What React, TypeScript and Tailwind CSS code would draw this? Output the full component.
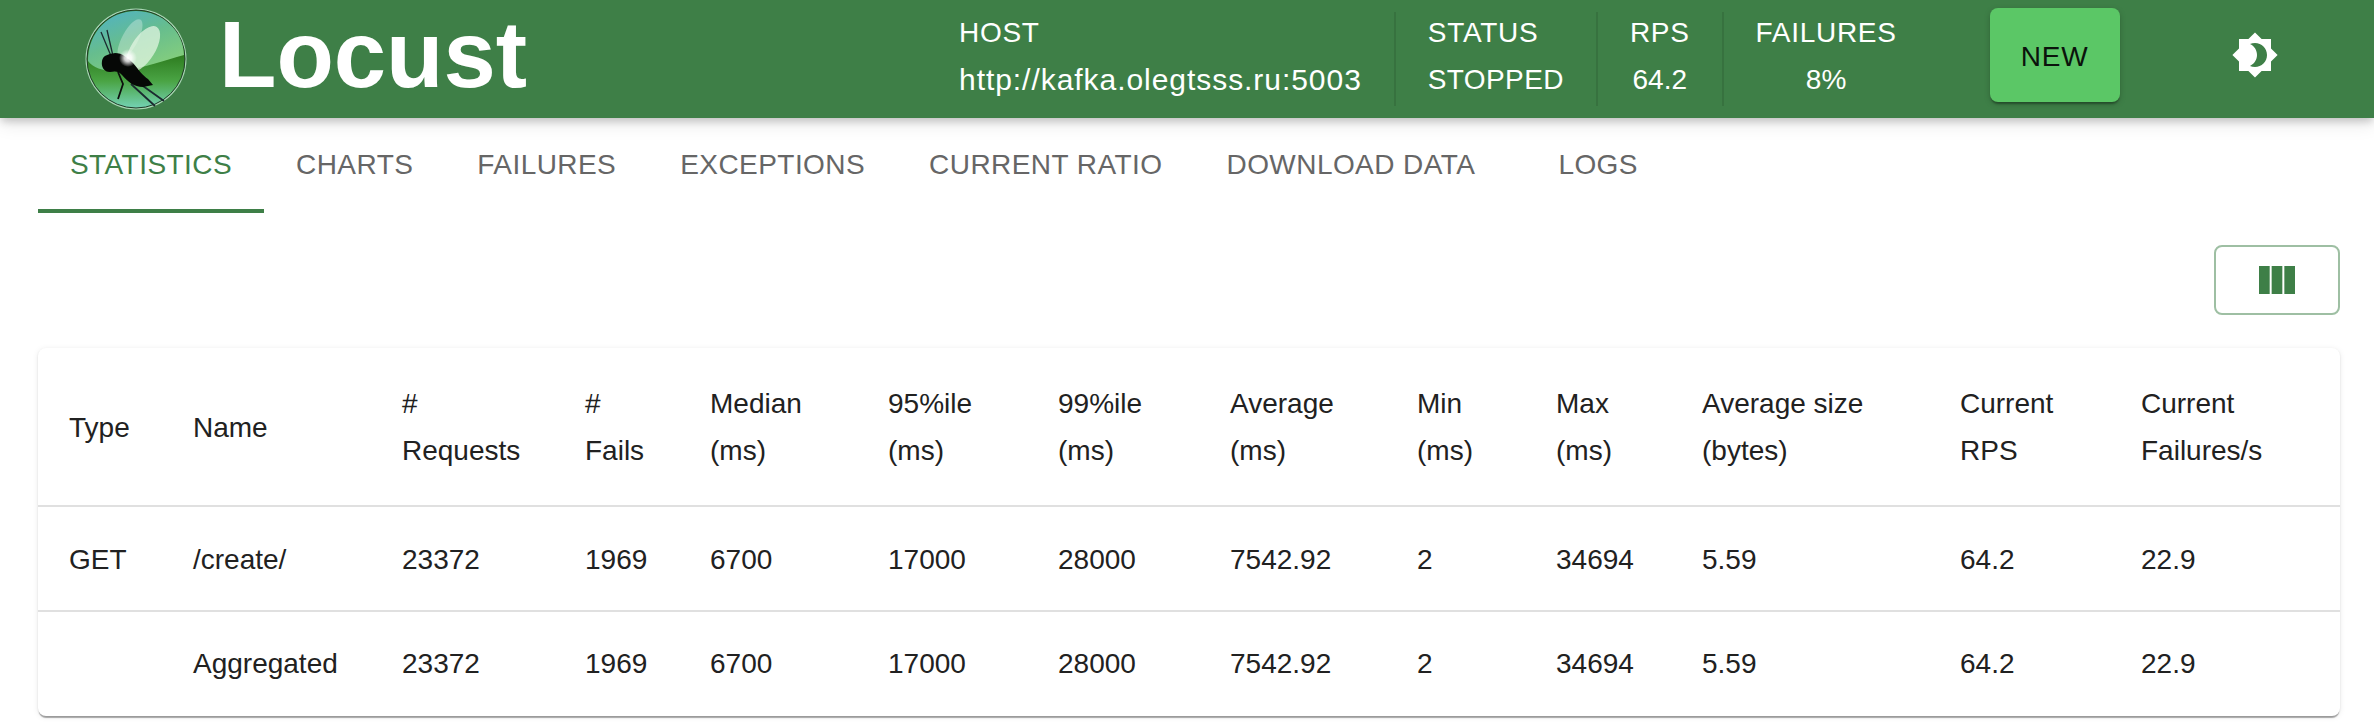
import { FC } from "react";

const COLUMNS = [
  { width: 123, label: ["Type"] },
  { width: 209, label: ["Name"] },
  { width: 183, label: ["#", "Requests"] },
  { width: 125, label: ["#", "Fails"] },
  { width: 178, label: ["Median", "(ms)"] },
  { width: 170, label: ["95%ile", "(ms)"] },
  { width: 172, label: ["99%ile", "(ms)"] },
  { width: 187, label: ["Average", "(ms)"] },
  { width: 139, label: ["Min", "(ms)"] },
  { width: 146, label: ["Max", "(ms)"] },
  { width: 258, label: ["Average size", "(bytes)"] },
  { width: 181, label: ["Current", "RPS"] },
  { width: 231, label: ["Current", "Failures/s"] },
];

const ROWS = [
  ["GET", "/create/", "23372", "1969", "6700", "17000", "28000", "7542.92", "2", "34694", "5.59", "64.2", "22.9"],
  ["", "Aggregated", "23372", "1969", "6700", "17000", "28000", "7542.92", "2", "34694", "5.59", "64.2", "22.9"],
];

const TABS = ["STATISTICS", "CHARTS", "FAILURES", "EXCEPTIONS", "CURRENT RATIO", "DOWNLOAD DATA", "LOGS"];

const LocustLogo = () => (
  <svg width="102" height="102" viewBox="0 0 102 102" className="shrink-0">
    <defs>
      <linearGradient id="globe" x1="0.5" y1="0.45" x2="0.5" y2="1">
        <stop offset="0" stopColor="#2c7a1e" />
        <stop offset="0.5" stopColor="#4aa444" />
        <stop offset="1" stopColor="#74d2b4" />
      </linearGradient>
      <linearGradient id="gloss" x1="0.1" y1="0" x2="0.7" y2="1">
        <stop offset="0" stopColor="#4fb2c6" />
        <stop offset="0.5" stopColor="#66bd8e" />
        <stop offset="1" stopColor="#86cf7c" />
      </linearGradient>
      <radialGradient id="glow" cx="0.5" cy="0.5" r="0.5">
        <stop offset="0" stopColor="#ffffff" />
        <stop offset="0.4" stopColor="#ffffff" stopOpacity="0.8" />
        <stop offset="1" stopColor="#ffffff" stopOpacity="0" />
      </radialGradient>
    </defs>
    <circle cx="51" cy="51" r="50.5" fill="#a9d6b4" />
    <circle cx="51" cy="51" r="49" fill="url(#globe)" stroke="#1f3a26" strokeWidth="1" />
    <path d="M3 53C3 24 24 3 51 3C78 3 99 24 99 47C80 52 60 60 34 63C20 64 8 60 3 53Z" fill="url(#gloss)" />
    <ellipse cx="45" cy="31" rx="8" ry="22" transform="rotate(28 45 31)" fill="#ffffff" opacity="0.3" />
    <ellipse cx="58" cy="41" rx="12" ry="26" transform="rotate(32 58 41)" fill="#e6f7e4" opacity="0.72" />
    <g stroke="#1b2a30" fill="none">
      <path d="M16 24L26 48M22 22L28 48" strokeWidth="1.3" />
      <path d="M33 64L38 76L33 91" strokeWidth="1.8" stroke="#0d0f0d" />
      <path d="M46 76L70 98M58 78L79 93" strokeWidth="1.8" />
    </g>
    <path
      d="M17 53C18 47 24 46 30 45C37 45 43 50 48 55C53 61 58 68 63 71L68 77L58 79C49 79 43 74 37 67C34 63 30 63 25 64C19 64 16 59 17 53Z"
      fill="#060806"
    />
    <circle cx="43" cy="50" r="9" fill="url(#glow)" />
  </svg>
);

const Stat: FC<{ label: string; value: string; valueClass?: string; center?: boolean; last?: boolean }> = ({
  label,
  value,
  valueClass = "",
  center,
  last,
}) => (
  <div className="flex h-[94px] items-center">
    <div className={`flex flex-col pb-[6px] text-[28px] leading-[47px] text-white ${center ? "items-center" : "items-start"}`}>
      <span className="tracking-[0.7px]">{label}</span>
      <span className={valueClass}>{value}</span>
    </div>
    {!last && <div className="mx-[32px] h-[94px] w-[2px] bg-black/10" />}
  </div>
);

export default function App() {
  return (
    <div className="min-h-[728px] bg-white font-['Liberation_Sans',Arial,sans-serif]">
      {/* App bar */}
      <header className="relative z-10 flex h-[118px] items-center bg-[#3e7f47] pl-[85px] shadow-[0_4px_8px_-1px_rgba(0,0,0,0.2),0_8px_16px_rgba(0,0,0,0.08)]">
        <LocustLogo />
        <span className="ml-[32px] w-[740px] pb-[8px] text-[94px] leading-none font-bold text-white">Locust</span>
        <Stat label="HOST" value="http://kafka.olegtsss.ru:5003" valueClass="text-[30px] tracking-[0.95px]" />
        <Stat label="STATUS" value="STOPPED" valueClass="tracking-[0.4px]" />
        <Stat label="RPS" value="64.2" center />
        <Stat label="FAILURES" value="8%" center last />
        <button className="mb-[8px] ml-[93px] h-[94px] w-[130px] rounded-[8px] bg-[#5bc766] pt-[3px] text-[28px] tracking-[0.8px] text-[#0b130c] shadow-[0_3px_2px_-1px_rgba(0,0,0,0.3),0_2px_6px_rgba(0,0,0,0.2)]">
          NEW
        </button>
        <svg viewBox="0 0 24 24" className="mb-[8px] ml-[111px] h-[48px] w-[48px] fill-white">
          <path d="M20 8.69V4h-4.69L12 .69 8.69 4H4v4.69L.69 12 4 15.31V20h4.69L12 23.31 15.31 20H20v-4.69L23.31 12 20 8.69zM12 18c-.89 0-1.74-.2-2.5-.55C11.56 16.5 13 14.42 13 12s-1.44-4.5-3.5-5.45C10.26 6.2 11.11 6 12 6c3.31 0 6 2.69 6 6s-2.69 6-6 6z" />
        </svg>
      </header>

      <main className="ml-[38px] w-[2302px]">
        {/* Tabs */}
        <nav className="flex h-[95px]">
          {TABS.map((tab, i) => (
            <div
              key={tab}
              className={`flex items-center border-b-4 px-[32px] pt-[2px] text-[28px] tracking-[0.44px] ${
                i === 0 ? "border-[#3e7f47] text-[#3e7f47]" : "border-transparent text-[#666666]"
              } ${tab === "LOGS" ? "ml-[19px]" : ""}`}
            >
              {tab}
            </div>
          ))}
        </nav>

        {/* Column selector */}
        <div className="mt-[32px] flex justify-end">
          <button className="flex h-[70px] w-[126px] items-center justify-center rounded-[8px] border-2 border-[#3e7f47]/50">
            <svg viewBox="0 0 24 24" className="h-[48px] w-[48px] fill-[#3e7f47]">
              <path d="M14.67 5v14H9.33V5zm1 14H21V5h-5.33zm-7.33 0V5H3v14z" />
            </svg>
          </button>
        </div>

        {/* Stats table */}
        <div className="mt-[33px] overflow-hidden rounded-[8px] bg-white shadow-[0_3px_1px_-1px_rgba(0,0,0,0.3),0_1px_2px_rgba(0,0,0,0.12),0_1px_6px_rgba(0,0,0,0.08)]">
          <table className="w-full table-fixed border-collapse text-[28px] text-[#212121]">
            <colgroup>
              {COLUMNS.map((col, i) => (
                <col key={i} style={{ width: col.width }} />
              ))}
            </colgroup>
            <thead>
              <tr className="border-b-2 border-[#e0e0e0]">
                {COLUMNS.map((col, i) => (
                  <th key={i} className="pt-[32px] pb-[31px] pl-[32px] text-left leading-[47px] font-normal first:pl-[31px]">
                    {col.label.map((line) => (
                      <div key={line}>{line}</div>
                    ))}
                  </th>
                ))}
              </tr>
            </thead>
            <tbody>
              {ROWS.map((row, r) => (
                <tr key={r} className={r === 0 ? "border-b-2 border-[#e0e0e0]" : ""}>
                  {row.map((cell, c) => (
                    <td
                      key={c}
                      className={`h-[105px] pl-[32px] leading-[40px] first:pl-[31px] ${r === 0 ? "pt-[3px]" : ""}`}
                    >
                      {cell}
                    </td>
                  ))}
                </tr>
              ))}
            </tbody>
          </table>
        </div>
      </main>
    </div>
  );
}
